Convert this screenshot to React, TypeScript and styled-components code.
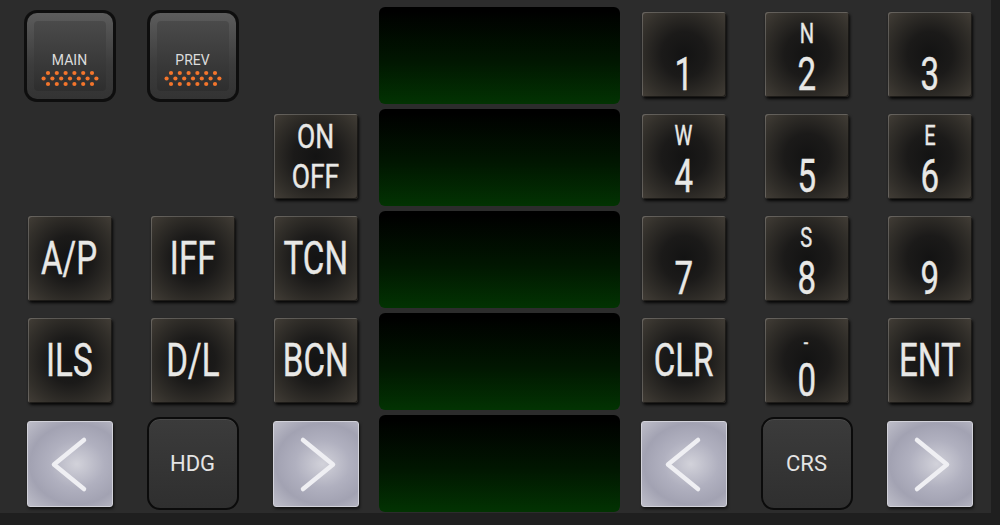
import styled, { createGlobalStyle } from "styled-components";

const GlobalStyle = createGlobalStyle`
     html, body {
          margin: 0;
          padding: 0;
          background: #1f1f1f;
          font-family: Roboto, "Liberation Sans", sans-serif;
     }
`;

const Panel = styled.div`
     width: 983px;
     height: 506px;
     padding: 7px 0 0 8px;
     background: #2c2c2c;
     display: grid;
     grid-template-columns: repeat(3, 123px) 245px repeat(3, 123px);
     grid-template-rows: repeat(5, 97px);
     row-gap: 5px;
     justify-items: center;
     align-items: center;
`;

const Screen = styled.div`
     width: 241px;
     height: 97px;
     border-radius: 6px;
     background: linear-gradient(#000 4%, #011601 55%, #023302 100%);
`;

const Key = styled.div<{ $stack?: boolean }>`
     width: 84px;
     height: 85px;
     margin-bottom: 3px;
     box-sizing: border-box;
     border-radius: 3px;
     display: flex;
     flex-direction: column;
     align-items: center;
     justify-content: ${(p) => (p.$stack ? "flex-end" : "center")};
     background: radial-gradient(ellipse at center, #131313 0%, #1b1a19 38%, #322f2a 75%, #433e37 100%);
     box-shadow: inset 1px 1px 0 rgba(255, 255, 255, 0.2), inset -1px -1px 0 rgba(0, 0, 0, 0.5),
          1px 2px 3px rgba(0, 0, 0, 0.85);
     color: #e8e8e6;
`;

const Label = styled.span<{ $size: number; $line?: number; $squeeze?: number }>`
     display: block;
     font-size: ${(p) => p.$size}px;
     font-weight: 400;
     line-height: ${(p) => p.$line ?? p.$size}px;
     transform: scaleX(${(p) => p.$squeeze ?? 0.72});
     text-align: center;
     white-space: nowrap;
     -webkit-text-stroke: 0.4px #e8e8e6;
`;

const Compass = styled(Label)`
     margin-bottom: 3px;
`;

const SoftKey = styled.div`
     width: 92px;
     height: 92px;
     box-sizing: border-box;
     padding: 3px;
     border-radius: 13px;
     background: #0e0e0e;
`;

const SoftBevel = styled.div`
     height: 100%;
     box-sizing: border-box;
     padding: 8px 7px;
     border-radius: 10px;
     background: linear-gradient(#5c5c5c, #3c3c3c 60%, #333);
`;

const SoftFace = styled.div`
     height: 100%;
     box-sizing: border-box;
     padding-bottom: 4px;
     border-radius: 4px;
     background: linear-gradient(#4a4a4a, #2e2e2e);
     display: flex;
     flex-direction: column;
     justify-content: flex-end;
     align-items: center;
     gap: 3px;
`;

const SoftText = styled.span`
     font-size: 14px;
     line-height: 14px;
     color: #dcdcdc;
`;

const ModeKey = styled.div`
     width: 92px;
     height: 93px;
     box-sizing: border-box;
     border: 2px solid #0b0b0b;
     border-radius: 13px;
     background: linear-gradient(#3b3b3b, #2f2f2f);
     box-shadow: inset 0 1px 0 rgba(255, 255, 255, 0.08);
     display: flex;
     align-items: center;
     justify-content: center;
     font-size: 22px;
     color: #e4e4e4;
`;

const ArrowKey = styled.div`
     width: 86px;
     height: 86px;
     box-sizing: border-box;
     border: 1px solid #d2d2da;
     border-radius: 3px;
     background: radial-gradient(ellipse at 58% 50%, #d2d2da 0%, #b0b0bf 40%, #a2a2b2 68%, #bebec9 100%);
     box-shadow: 1px 2px 3px rgba(0, 0, 0, 0.6);
`;

const Blank = styled.div``;

function Leds() {
     const dots: { x: number; y: number }[] = [];
     [-22, -13.2, -4.4, 4.4, 13.2, 22].forEach((x) => {
          dots.push({ x, y: 3 });
          dots.push({ x, y: 14 });
     });
     [-26.4, -17.6, -8.8, 0, 8.8, 17.6, 26.4].forEach((x) => dots.push({ x, y: 8.5 }));
     return (
          <svg width="62" height="17" viewBox="0 0 62 17">
               {dots.map((d, i) => (
                    <circle key={i} cx={31 + d.x} cy={d.y} r="2.1" fill="#f4752c" />
               ))}
          </svg>
     );
}

function Soft({ label }: { label: string }) {
     return (
          <SoftKey>
               <SoftBevel>
                    <SoftFace>
                         <SoftText>{label}</SoftText>
                         <Leds />
                    </SoftFace>
               </SoftBevel>
          </SoftKey>
     );
}

function Arrow({ dir }: { dir: "left" | "right" }) {
     const pts = dir === "left" ? "56,18 26,42.5 56,67" : "29,18 59,42.5 29,67";
     return (
          <ArrowKey>
               <svg width="84" height="84" viewBox="0 0 84 84">
                    <polyline points={pts} fill="none" stroke="#efeff3" strokeWidth="4.5" strokeLinecap="round" strokeLinejoin="round" />
               </svg>
          </ArrowKey>
     );
}

function Digit({ num, mark }: { num: string; mark?: string }) {
     return (
          <Key $stack>
               {mark && <Compass $size={mark === "-" ? 22 : 28}>{mark}</Compass>}
               <Label $size={46}>{num}</Label>
          </Key>
     );
}

function Word({ text }: { text: string }) {
     return (
          <Key>
               <Label $size={46}>{text}</Label>
          </Key>
     );
}

export default function App() {
     return (
          <>
               <GlobalStyle />
               <Panel>
                    <Soft label="MAIN" />
                    <Soft label="PREV" />
                    <Blank />
                    <Screen />
                    <Digit num="1" />
                    <Digit num="2" mark="N" />
                    <Digit num="3" />

                    <Blank />
                    <Blank />
                    <Key>
                         <Label $size={34} $line={40} $squeeze={0.78}>
                              ON
                              <br />
                              OFF
                         </Label>
                    </Key>
                    <Screen />
                    <Digit num="4" mark="W" />
                    <Digit num="5" />
                    <Digit num="6" mark="E" />

                    <Word text="A/P" />
                    <Word text="IFF" />
                    <Word text="TCN" />
                    <Screen />
                    <Digit num="7" />
                    <Digit num="8" mark="S" />
                    <Digit num="9" />

                    <Word text="ILS" />
                    <Word text="D/L" />
                    <Word text="BCN" />
                    <Screen />
                    <Word text="CLR" />
                    <Digit num="0" mark="-" />
                    <Word text="ENT" />

                    <Arrow dir="left" />
                    <ModeKey>HDG</ModeKey>
                    <Arrow dir="right" />
                    <Screen />
                    <Arrow dir="left" />
                    <ModeKey>CRS</ModeKey>
                    <Arrow dir="right" />
               </Panel>
          </>
     );
}
